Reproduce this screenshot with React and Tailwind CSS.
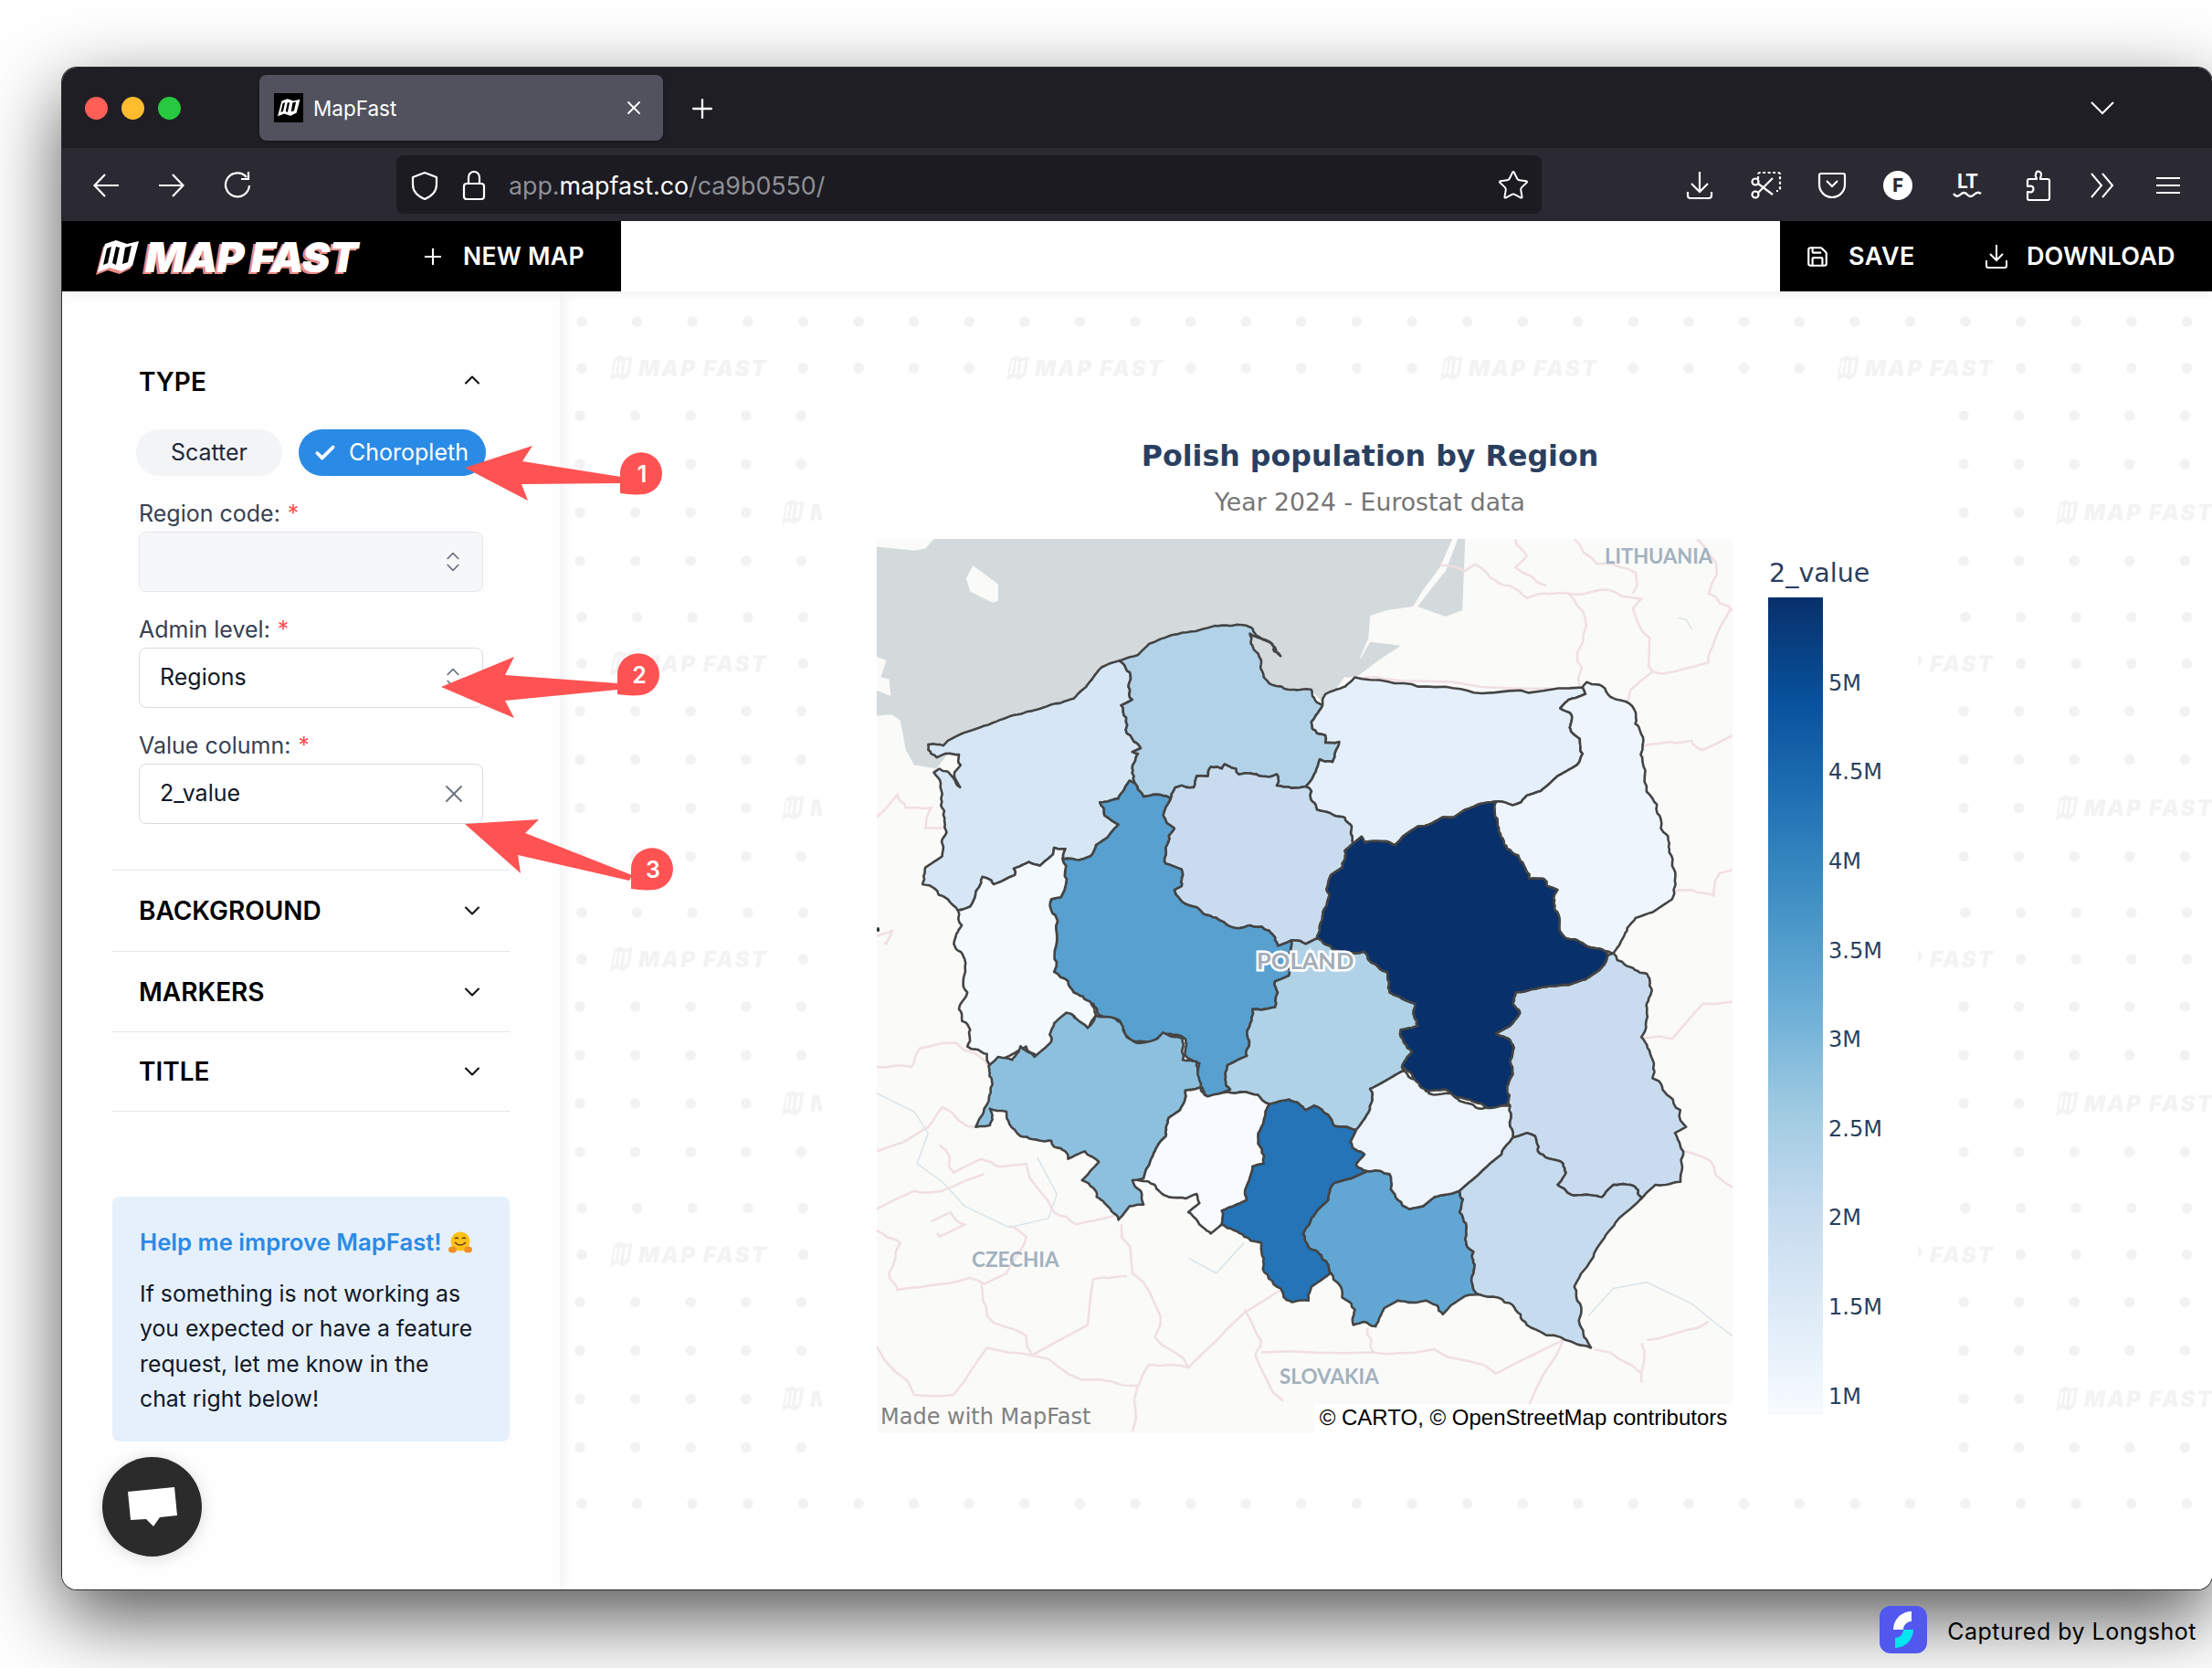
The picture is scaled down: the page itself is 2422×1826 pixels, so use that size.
import { Check, ChevronDown, ChevronUp, ChevronsUpDown, Plus, Save, Star, X } from 'lucide-react';

// Map coordinates are in the two crops they were traced from: "upper" points as is,
// "lower" points (odd segments) get squeezed into the same space by parse().
const parse = (str, lower) =>
  str.trim().split(/\s+/).filter(Boolean).map((p) => {
    const [x, y] = p.split(',').map(Number);
    return [x, lower ? 1274 + 0.8167 * y : y];
  });
const toPoints = (segs) => segs.flatMap((s, i) => parse(s, i % 2 === 1));

// roughen borders; noise depends on the midpoint so that shared edges stay shared
function roughen(pts) {
  return pts.flatMap(([x, y], i) => {
    const [a, b] = pts[(i + 1) % pts.length];
    const len = Math.hypot(a - x, b - y);
    if (len < 10) return [[x, y]];
    const mx = (x + a) / 2;
    const my = (y + b) / 2;
    const n = Math.sin(Math.round(mx) * 12.9 + Math.round(my) * 78.2) * 43758.5;
    const r = (n - Math.floor(n) - 0.5) * Math.min(len, 60) * 0.22;
    return [[x, y], [mx + r, my - r]];
  });
}

const REGIONS = [
  { fill: '#d6e6f4', segs: ['468,350 435,368 418,400 385,452 345,468 302,487 270,500 225,525 190,543 160,565 152,578 125,575 130,600 140,610 155,600 180,602 183,630 172,650 182,690 170,665 145,640 135,650 148,720 155,790 158,810 150,830 150,875 120,905 115,950 135,960 160,990 178,1020 200,1010 210,970 222,930 238,940 242,950 280,925 278,908 305,890 325,900 348,870 350,852 370,855 365,882 395,885 415,875 425,845 445,825 465,790 440,765 432,730 465,720 485,672 495,680 490,640 500,600 490,595 505,585 490,560 480,545 470,470 490,455 483,420 487,400 478,370'] },
  { fill: '#b2d2e8', segs: ['468,350 500,335 520,305 560,282 637,257 688,255 715,285 740,305 755,338 745,315 725,295 700,278 710,325 720,360 725,395 740,415 770,428 810,428 815,450 830,470 822,490 810,515 820,545 835,550 835,570 860,568 848,622 825,615 815,655 800,688 775,692 748,685 748,655 735,662 712,655 680,655 675,640 655,628 650,640 630,635 625,660 605,660 600,690 578,685 567,690 558,722 540,710 510,715 495,680 490,640 500,600 490,595 505,585 490,560 480,545 470,470 490,455 483,420 487,400 478,370'] },
  { fill: '#e4eff9', segs: ['888,395 1000,420 1115,438 1295,422 1300,440 1270,455 1255,478 1275,495 1272,530 1290,560 1295,600 1285,630 1250,660 1220,700 1195,712 1185,730 1170,738 1140,728 1110,735 1085,750 1065,770 1045,770 1020,790 1000,795 975,820 960,845 935,835 905,838 900,822 885,840 880,790 870,772 850,765 820,750 810,700 800,688 815,655 825,615 848,622 860,568 835,570 835,550 820,545 810,515 822,490 830,470 835,440 870,420'] },
  { fill: '#eef5fc', segs: ['1295,422 1302,408 1325,415 1340,440 1372,460 1390,490 1398,540 1402,620 1420,720 1435,800 1450,840 1455,900 1455,990 1420,1025 1390,1040 1370,1085 1350,1135 1330,1125 1290,1105 1265,1095 1250,1025 1250,965 1232,955 1225,935 1200,935 1190,900 1160,855 1145,800 1140,728 1170,738 1185,730 1195,712 1220,700 1250,660 1285,630 1295,600 1290,560 1272,530 1275,495 1255,478 1270,455 1300,440'] },
  { fill: '#c9dcef', segs: ['558,722 567,690 578,685 600,690 605,660 625,660 630,635 650,640 655,628 675,640 680,655 712,655 735,662 748,655 748,685 775,692 800,688 810,700 820,750 850,765 870,772 880,790 885,840 870,860 865,905 845,925 840,990 830,1040 820,1095 800,1110 775,1100 750,1115 735,1075 700,1060 680,1068 640,1040 600,1010 575,990 565,965 578,955 578,910 550,895 555,820 565,800 545,765'] },
  { fill: '#58a0cf', segs: ['485,672 495,680 510,715 540,710 558,722 545,765 565,800 555,820 550,895 578,910 578,955 565,965 575,990 600,1010 640,1040 680,1068 700,1060 735,1075 750,1115 775,1100 770,1195 745,1210 745,1280 705,1285 695,1350 695,1410 660,1435 665,1500 625,1520 610,1490 610,1430 585,1410 585,1365 545,1350 525,1375 490,1370 475,1340 460,1310 430,1300 420,1270 385,1240 375,1210 350,1185 355,1090 345,1020 345,990 362,985 365,882 395,885 415,875 425,845 445,825 465,790 440,765 432,730 465,720'] },
  { fill: '#f4f9fe', segs: ['178,1020 200,1010 210,970 222,930 238,940 242,950 280,925 278,908 305,890 325,900 348,870 350,852 370,855 365,882 362,985 345,990 345,1020 355,1090 350,1185 375,1210 385,1240 415,1265 425,1300 412,1335 395,1320 372,1295 350,1345 345,1375 320,1410 300,1385 270,1410 235,1435 230,1405 195,1385 200,1340 180,1285 195,1240 190,1150 172,1100 185,1060'] },
  { fill: '#c9dcef', segs: ['1350,1135 1370,1165 1410,1190 1418,1230 1410,1280 1400,1360 1420,1420 1420,1470', '1450,300 1480,400 1460,420 1475,480 1470,580 1425,590 1400,635 1380,590 1350,590 1330,630 1280,625 1250,590 1265,550 1260,520 1215,480 1210,430 1195,420 1170,435 1165,330', '1160,1500 1170,1460 1170,1380 1140,1350 1165,1330 1183,1295 1170,1270 1175,1240 1230,1225 1270,1220 1300,1205 1325,1180 1340,1140'] },
  { fill: '#b0d2e7', segs: ['775,1100 800,1110 820,1095 850,1125 880,1135 905,1130 925,1165 945,1185 950,1240 995,1270 1000,1330 970,1340 990,1400 972,1440', '975,215 915,275 915,340 890,410 850,395 840,360 815,330 800,345 770,310 735,325 715,295 660,285', '665,1500 660,1435 695,1410 695,1350 705,1285 745,1280 745,1210 770,1195'] },
  { fill: '#8dc0de', segs: ['', '233,200 250,170 275,180 290,135 315,170 345,120 350,60 372,25 390,45 410,75 425,35 460,45 480,105 500,125 535,110 545,90 580,110 580,180 605,185 612,270 585,280 575,345 555,370 550,430 525,500 510,570 490,575 505,610 510,655 485,660 465,705 440,650 420,600 400,575 430,515 405,480 375,505 370,480 350,465 345,445 310,440 290,430 270,390 265,350 235,340 235,395 210,400 225,340 240,260'] },
  { fill: '#f7fbff', segs: ['', '585,280 612,270 625,300 660,285 715,295 735,325 725,380 715,430 725,520 705,530 695,640 650,675 650,720 630,750 605,705 590,680 610,650 605,620 585,635 555,630 530,590 500,575 510,570 525,500 550,430 555,370 575,345'] },
  { fill: '#62a7d3', segs: ['', '910,545 950,555 965,640 985,670 1010,660 1030,630 1075,610 1075,680 1085,770 1100,810 1100,880 1110,950 1085,955 1060,985 1045,1015 1015,970 965,970 940,995 925,1055 905,1040 885,1050 888,1000 865,960 845,880 830,835 805,795 795,750 810,700 840,640 850,585 880,570'] },
  { fill: '#2474b7', segs: ['', '735,325 770,310 800,345 815,330 840,360 850,395 890,410 880,450 905,490 890,525 910,545 880,570 850,585 840,640 810,700 795,750 805,795 830,835 845,880 810,925 805,970 775,975 755,930 725,850 720,780 690,760 650,720 650,675 695,640 705,530 725,520 715,430 725,380'] },
  { fill: '#edf4fc', segs: ['', '975,215 1005,260 1020,290 1060,290 1075,315 1115,340 1165,330 1170,435 1150,490 1115,545 1075,610 1030,630 1010,660 985,670 965,640 950,555 910,545 890,525 905,490 880,450 890,410 915,340 915,275'] },
  { fill: '#c7dbef', segs: ['', '1170,435 1195,420 1210,430 1215,480 1260,520 1265,550 1250,590 1280,625 1330,630 1350,590 1380,590 1400,635 1360,700 1320,800 1280,925 1290,1050 1310,1125 1275,1105 1195,1050 1170,985 1110,950 1100,880 1100,810 1085,770 1075,680 1075,610 1115,545 1150,490'] },
  { fill: '#08306b', segs: ['1140,728 1145,800 1160,855 1190,900 1200,935 1225,935 1232,955 1250,965 1250,1025 1265,1095 1290,1105 1330,1125 1340,1140 1325,1180 1300,1205 1270,1220 1230,1225 1175,1240 1170,1270 1183,1295 1165,1330 1140,1350 1170,1380 1170,1460 1160,1500 1160,1540 1125,1550 1070,1520 1050,1500 1015,1505 990,1460 972,1440 990,1400 970,1340 1000,1330 995,1270 950,1240 945,1185 925,1165 905,1130 880,1135 850,1125 820,1095 830,1040 840,990 845,925 865,905 870,860 885,840 900,822 905,838 935,835 960,845 975,820 1000,795 1020,790 1045,770 1065,770 1085,750 1110,735'] },
];

const SEA = [
  '33,45 100,55 120,50 135,24 1062,24 1040,100 1010,160 992,205 945,215 915,230 912,290 895,350 870,392 835,470 810,430 600,400 300,520 160,600 140,640 100,630 85,590 75,510 60,495 33,498 33,430 58,445 55,400 40,395 50,350 33,340',
  '1072,24 1085,24 1080,215 1050,232 1000,205 1018,170 1050,110',
  '900,340 915,300 970,310 930,350 890,395 868,395',
];

const BORDERS = [
  ['1040,95 1085,110 1102,92 1130,128 1165,150 1195,182 1225,170 1270,170 1300,240 1285,330 1290,420'],
  ['888,398 1000,405 1240,425'],
  ['1270,170 1340,160 1400,185 1385,210 1415,290 1420,380 1440,385 1520,355 1530,300 1560,210'],
  ['1175,24 1195,70 1175,100 1230,150'],
  ['1280,24 1320,90 1390,115 1385,170'],
  ['1500,24 1535,120 1520,170 1565,220'],
  ['1400,580 1440,570 1490,565 1510,590 1565,550'],
  ['1375,460 1380,430 1420,380'],
  ['1455,970 1490,965 1530,980 1540,920 1565,910'],
  ['33,770 70,710 85,745 130,745 120,800 155,800'],
  ['33,1090 60,1075 50,1110 33,1095'],
  ['33,1440 95,1440 110,1390 175,1375 235,1440'],
  ['1400,1360 1455,1365 1510,1270 1565,1265'],
  ['', '33,480 80,450 125,400 150,335 180,380 210,400'],
  ['', '145,460 170,550 220,505 250,530 300,520 350,680 390,720 460,690'],
  ['', '33,670 100,610 150,610 225,555'],
  ['', '130,710 165,680 190,720 145,760 130,710'],
  ['', '33,740 75,780 55,880 70,935 130,920 200,895 225,915 265,880 300,760 270,725'],
  ['', '220,915 230,1020 300,1085 310,1150 410,1050 420,900 480,890'],
  ['', '33,1120 100,1280 170,1280 230,1125 310,1150 400,1230 500,1250 520,1180 590,1190 690,1010 760,930'],
  ['', '500,1250 490,1400'],
  ['', '470,720 490,880 540,1020 530,1090 590,1190'],
  ['', '690,1000 720,1100 710,1150 760,1300'],
  ['', '910,1060 920,1140 720,1140'],
  ['', '920,1140 1030,1130 1140,1210 1260,1100'],
  ['', '1260,1100 1200,1310'],
  ['', '1400,1110 1400,1240'],
  ['', '1315,1130 1400,1210'],
  ['', '1410,1100 1500,1060 1520,1040'],
  ['', '1475,480 1530,530 1565,600'],
];

const RIVERS = [
  ['', '33,290 100,350 125,420 105,520 150,580 190,660 270,730 340,700 355,620 320,500'],
  ['', '690,780 640,880 590,830'],
  ['', '1305,1020 1350,930 1410,910 1490,980 1530,1040 1565,1090'],
  ['1465,235 1480,240 1490,265'],
];

const str = (pts) => pts.map(([x, y]) => `${x.toFixed(1)},${y.toFixed(1)}`).join(' ');

const LEGEND_TICKS = ['5M', '4.5M', '4M', '3.5M', '3M', '2.5M', '2M', '1.5M', '1M'];

const DOT_ROWS = [
  { y: 22, x: 17, skip: [] },
  { y: 73, x: 17, skip: [1, 2, 3, 8, 9, 10] },
  { y: 125, x: 15, skip: [] },
  { y: 178, x: 15, skip: [] },
  { y: 231, x: 15, skip: [4, 5, 6, 12, 13, 14] },
  { y: 284, x: 15, skip: [] },
];
const WATERMARKS = [
  { x: 47, y: 73 },
  { x: 481, y: 73 },
  { x: 235, y: 231 },
  { x: 721, y: 231 },
];

function LogoMark({ fill, slit }) {
  return (
    <>
      <polygon points="10,5 22,1 34,5 47,2 40,29 28,35 15,31 2,36" fill={fill} />
      <polygon points="12,10 17,8 13,26 8,28" fill={slit} />
      <polygon points="22,8 26,9 22,28 18,26" fill={slit} />
      <polygon points="32,9 39,7 35,25 29,27" fill={slit} />
    </>
  );
}

function DotPattern() {
  return (
    <svg className="absolute top-0 left-0 w-full h-[1341px]">
      <defs>
        <pattern id="mapfast-tile" x="7" y="11" width="909" height="323.5" patternUnits="userSpaceOnUse">
          {DOT_ROWS.map((row) =>
            Array.from({ length: 15 }, (_, k) =>
              row.skip.includes(k) ? null : (
                <circle key={`${row.y}-${k}`} cx={row.x + 60.6 * k} cy={row.y} r="5.8" fill="#f2f2f2" />
              ),
            ),
          )}
          {WATERMARKS.map((w) => (
            <g key={w.x}>
              <g transform={`translate(${w.x} ${w.y - 15}) scale(0.55 0.8)`}>
                <LogoMark fill="#f3f3f3" slit="#ffffff" />
              </g>
              <text x={w.x + 32} y={w.y + 9} fontFamily="Inter" fontWeight="900" fontStyle="italic" fontSize="24" fill="#f3f3f3" textLength="140">
                MAP FAST
              </text>
            </g>
          ))}
        </pattern>
      </defs>
      <rect width="100%" height="100%" fill="url(#mapfast-tile)" />
    </svg>
  );
}

function PolandMap() {
  return (
    <div className="relative w-[937px] h-[979px] bg-[#fafaf8] overflow-hidden shrink-0">
      <svg className="w-full h-full block" viewBox="33 24 1530 2398" preserveAspectRatio="none">
        {SEA.map((s) => (
          <polygon key={s} points={str(parse(s))} fill="#d4dadc" />
        ))}
        <polygon points="193,130 205,95 250,145 250,190 240,195 200,165" fill="#fafaf8" />
        {RIVERS.map((r, i) => (
          <polyline key={i} points={str(toPoints(r))} fill="none" stroke="#d9e4ea" strokeWidth="1.5" vectorEffect="non-scaling-stroke" />
        ))}
        {BORDERS.map((b, i) => (
          <polyline key={i} points={str(roughen(roughen(toPoints(b))).slice(0, -3))} fill="none" stroke="#f0dfe2" strokeWidth="2.5" vectorEffect="non-scaling-stroke" />
        ))}
        {REGIONS.map((r) => (
          <polygon
            key={r.segs.join('')}
            points={str(roughen(roughen(roughen(toPoints(r.segs)))))}
            fill={r.fill}
            stroke="#444444"
            strokeWidth="2.6"
            strokeLinejoin="round"
            vectorEffect="non-scaling-stroke"
          />
        ))}
      </svg>
      <span className="absolute left-0 top-[425px] w-[3px] h-[5px] rounded-full bg-[#333]" />
      <span className="absolute left-[797px] top-[7px] text-[22px] leading-[24px] font-bold text-[#a3b1bf] font-['Lato',sans-serif]">LITHUANIA</span>
      <span className="absolute left-[416px] top-[447px] text-[25.5px] leading-[28px] font-bold text-[#a3adb8] font-['Lato',sans-serif] [-webkit-text-stroke:5px_#ffffff] [paint-order:stroke_fill]">POLAND</span>
      <span className="absolute left-[104px] top-[777px] text-[22.5px] leading-[24px] font-bold text-[#a3b1bf] font-['Lato',sans-serif]">CZECHIA</span>
      <span className="absolute left-[441px] top-[905px] text-[22.5px] leading-[24px] font-bold text-[#a3b1bf] font-['Lato',sans-serif]">SLOVAKIA</span>
      <span className="absolute left-[4px] bottom-[2px] text-[24px] leading-[32px] text-[#808080] font-['DejaVu_Sans',sans-serif]">Made with MapFast</span>
      <span className="absolute right-0 bottom-0 h-[32px] w-[458px] bg-white text-black text-[24px] leading-[30px] text-center whitespace-nowrap font-['Liberation_Sans',sans-serif]">© CARTO, © OpenStreetMap contributors</span>
    </div>
  );
}

function Legend() {
  return (
    <div className="ml-[39px] pt-[20px] font-['DejaVu_Sans',sans-serif] text-[#2a3f5f]">
      <div className="text-[28.5px] leading-[36px] ml-[1px]">2_value</div>
      <div className="flex mt-[8px]">
        <div className="w-[60px] h-[895px] bg-[linear-gradient(to_bottom,#08306b_0%,#08519c_12.5%,#2171b5_25%,#4292c6_37.5%,#6baed6_50%,#9ecae1_62.5%,#c6dbef_75%,#deebf7_87.5%,#f7fbff_100%)]" />
        <div className="pl-[6px] pt-[45px]">
          {LEGEND_TICKS.map((t) => (
            <div key={t} className="h-[97.6px] flex items-center text-[24px]">{t}</div>
          ))}
        </div>
      </div>
    </div>
  );
}

function Arrows() {
  const arrows = [
    { n: 1, pts: '509,512 583,488 572,505 680,522 679,529 571,530 578,548', cx: 703, cy: 519 },
    { n: 2, pts: '483,752 563,719 553,739 676,748 676,755 553,767 563,786', cx: 700, cy: 739 },
    { n: 3, pts: '509,902 590,897 575,912 692,958 689,964 567,936 570,956', cx: 715, cy: 952 },
  ];
  return (
    <svg className="absolute inset-0 z-30 pointer-events-none" width="2422" height="1826" viewBox="0 0 2422 1826">
      {arrows.map((a) => (
        <g key={a.n}>
          <polygon points={a.pts} fill="#ff5252" />
          <path transform={`translate(${a.cx} ${a.cy})`} d="M-24 21V-2A23 23 0 1 1 2 22C-8 23-16 22-24 21Z" fill="#ff5252" />
          <text x={a.cx} y={a.cy + 9} textAnchor="middle" fontFamily="Inter" fontWeight="600" fontSize="25" fill="#ffffff">{a.n}</text>
        </g>
      ))}
    </svg>
  );
}

function TitleBar() {
  return (
    <div className="h-[88px] shrink-0 bg-[#1f1e24] flex items-center text-white">
      <div className="flex gap-[15px] ml-[25px]">
        <span className="w-[25px] h-[25px] rounded-full bg-[#ff5f57]" />
        <span className="w-[25px] h-[25px] rounded-full bg-[#febc2e]" />
        <span className="w-[25px] h-[25px] rounded-full bg-[#28c840]" />
      </div>
      <div className="ml-[86px] w-[442px] h-[72px] rounded-[8px] bg-[#52525e] flex items-center pl-[16px] pr-[20px] shadow-[0_1px_3px_rgba(0,0,0,0.4)]">
        <div className="w-[32px] h-[32px] bg-black flex items-center justify-center">
          <svg width="26" height="22" viewBox="0 0 48 38"><LogoMark fill="#ffffff" slit="#000000" /></svg>
        </div>
        <span className="ml-[11px] pt-[2px] text-[22.5px]">MapFast</span>
        <X className="ml-auto" size={24} strokeWidth={1.8} />
      </div>
      <Plus className="ml-[26px] mt-[2px]" size={34} strokeWidth={1.6} />
      <svg className="ml-auto mr-[106px]" width="28" height="16" viewBox="0 0 28 16" fill="none" stroke="currentColor" strokeWidth="2">
        <path d="M2 2l12 12L26 2" />
      </svg>
    </div>
  );
}

function Toolbar() {
  return (
    <div className="h-[80px] shrink-0 bg-[#2b2a33] pt-[2px] flex items-center text-white">
      <svg className="ml-[33px]" width="30" height="28" viewBox="0 0 30 28" fill="none" stroke="currentColor" strokeWidth="2.2">
        <path d="M29 14H3M14 2 2.5 14 14 26" />
      </svg>
      <svg className="ml-[42px]" width="30" height="28" viewBox="0 0 30 28" fill="none" stroke="currentColor" strokeWidth="2.2">
        <path d="M1 14h26M16 2l11.5 12L16 26" />
      </svg>
      <svg className="ml-[42px]" width="30" height="32" viewBox="0 0 30 32" fill="none" stroke="currentColor" strokeWidth="2.2">
        <path d="M25 7a13 13 0 1 0 3 9" />
        <path d="M27 1v8h-8" />
      </svg>
      <div className="ml-[159px] -mt-[2px] pt-[2px] w-[1254px] h-[64px] rounded-[8px] bg-[#1c1b22] flex items-center">
        <svg className="ml-[15px]" width="32" height="33" viewBox="0 0 32 33" fill="none" stroke="currentColor" strokeWidth="2.2" strokeLinejoin="round">
          <path d="M16 2 29 7v8c0 8-6 13-13 16C9 28 3 23 3 15V7z" />
        </svg>
        <svg className="ml-[25px]" width="26" height="33" viewBox="0 0 26 33" fill="none" stroke="currentColor" strokeWidth="2.2">
          <rect x="2" y="14" width="22" height="17" rx="3" />
          <path d="M7 14V7a6 6 0 0 1 12 0v7" />
        </svg>
        <div className="ml-[25px] text-[26.8px] text-[#8f8f95]">
          app.<span className="text-white">mapfast.co</span>/ca9b0550/
        </div>
        <Star className="ml-auto mr-[13px]" size={36} strokeWidth={1.3} />
      </div>
      <svg className="ml-[158px]" width="30" height="32" viewBox="0 0 30 32" fill="none" stroke="currentColor" strokeWidth="2.2">
        <path d="M15 1v22M6 14l9 9 9-9M2 23v4a3 3 0 0 0 3 3h20a3 3 0 0 0 3-3v-4" />
      </svg>
      <svg className="ml-[41px]" width="34" height="32" viewBox="0 0 34 32" fill="none" stroke="currentColor" strokeWidth="2.2">
        <path d="M8 9V4a2 2 0 0 1 2-2h20a2 2 0 0 1 2 2v16a2 2 0 0 1-2 2h-2" strokeDasharray="3 2.5" />
        <circle cx="5" cy="12" r="3.5" />
        <circle cx="5" cy="26" r="3.5" />
        <path d="M8 14l16 12M8 24 24 8" />
      </svg>
      <svg className="ml-[39px]" width="32" height="32" viewBox="0 0 32 32" fill="none" stroke="currentColor" strokeWidth="2.2">
        <path d="M4 3h24a2 2 0 0 1 2 2v10a14 14 0 0 1-28 0V5a2 2 0 0 1 2-2z" />
        <path d="M10 11l6 6 6-6" />
      </svg>
      <div className="ml-[40px] w-[32px] h-[32px] rounded-full bg-white text-[#2b2a33] text-[20px] font-extrabold flex items-center justify-center">F</div>
      <div className="ml-[44px] w-[32px] flex flex-col items-center">
        <span className="text-[21px] leading-[21px] font-bold tracking-[-1px]">LT</span>
        <svg width="32" height="10" viewBox="0 0 32 10" fill="none" stroke="currentColor" strokeWidth="2.4">
          <path d="M1 3q3.500 5 7.500 1t7.500 0 7.500 0 7.500-1" />
        </svg>
      </div>
      <svg className="ml-[47px]" width="30" height="34" viewBox="0 0 30 34" fill="none" stroke="currentColor" strokeWidth="2.2" strokeLinejoin="round">
        <path d="M13 2c2-1 5 0 5 3 0 2-1 3-1 5h8a2 2 0 0 1 2 2v19a2 2 0 0 1-2 2H5a2 2 0 0 1-2-2v-7c2 0 3 1 5 0 2-2 2-5 0-6-2-1-3 0-5 0v-6a2 2 0 0 1 2-2h8c0-2-2-3-1-5z" />
      </svg>
      <svg className="ml-[41px]" width="28" height="30" viewBox="0 0 28 30" fill="none" stroke="currentColor" strokeWidth="2">
        <path d="M2 2l11 13L2 28M14 2l11 13-11 13" />
      </svg>
      <svg className="ml-[45px]" width="26" height="20" viewBox="0 0 26 20" fill="none" stroke="currentColor" strokeWidth="2.2">
        <path d="M0 2h26M0 10h26M0 18h26" />
      </svg>
    </div>
  );
}

function AppHeader() {
  return (
    <div className="relative z-20 h-[77px] shrink-0 flex bg-white text-white shadow-[0_2px_12px_rgba(0,0,0,0.07)]">
      <div className="w-[612px] bg-black flex items-center">
        <svg className="ml-[37px] overflow-visible" width="48" height="38" viewBox="0 0 48 38">
          <g transform="translate(-2 3)"><LogoMark fill="#e98a86" slit="#e98a86" /></g>
          <LogoMark fill="#ffffff" slit="#000000" />
        </svg>
        <span className="ml-[6px] w-[238px] text-[46px] leading-none font-black italic tracking-[-1px] whitespace-nowrap [text-shadow:-3px_2px_0_#e98a86]">MAP FAST</span>
        <Plus className="ml-[63px]" size={28} strokeWidth={1.8} />
        <span className="ml-[19px] text-[26.5px] font-semibold tracking-[0.3px]">NEW MAP</span>
      </div>
      <div className="flex-1" />
      <div className="w-[473px] bg-black flex items-center">
        <Save className="ml-[28px]" size={26} strokeWidth={2} />
        <span className="ml-[21px] pt-[1px] text-[27px] font-semibold tracking-[0.5px]">SAVE</span>
        <svg className="ml-[77px]" width="24" height="28" viewBox="0 0 24 28" fill="none" stroke="currentColor" strokeWidth="2">
          <path d="M12 1v17M5 11l7 7 7-7M1 18v6a2 2 0 0 0 2 2h18a2 2 0 0 0 2-2v-6" />
        </svg>
        <span className="ml-[21px] pt-[1px] text-[27px] font-semibold tracking-[0.2px]">DOWNLOAD</span>
      </div>
    </div>
  );
}

function Field({ label, mt, disabled, value, icon }) {
  return (
    <div className={mt}>
      <div className="h-[30px] px-[29px] flex items-center text-[25px] text-[#374151]">
        {label}: <span className="ml-[8px] text-[#ff5252]">*</span>
      </div>
      <div className={`mx-[29px] mt-[4px] h-[66px] rounded-[8px] border flex items-center pl-[22px] pr-[18px] text-[25px] text-[#111827] ${disabled ? 'bg-[#f6f7f9] border-[#e5e7eb]' : 'bg-white border-[#d8dbe1]'}`}>
        {value}
        <span className="ml-auto text-[#6b7280]">{icon}</span>
      </div>
    </div>
  );
}

function SectionRow({ title, height, last }) {
  return (
    <div className={`${height} px-[29px] flex items-center justify-between border-t border-[#e5e7eb] ${last ? 'border-b' : ''}`}>
      <span className="text-[28px] font-semibold text-black">{title}</span>
      <ChevronDown className="-mr-[2px]" size={28} strokeWidth={1.8} color="#111111" />
    </div>
  );
}

function HugEmoji() {
  return (
    <svg className="ml-[7px]" width="26" height="24" viewBox="0 0 26 24">
      <circle cx="13" cy="11" r="10.500" fill="#fcc21b" />
      <path d="M7 8q2-2 4 0M15 8q2-2 4 0" fill="none" stroke="#6b3d0f" strokeWidth="1.400" />
      <path d="M7 12q6 6 12 0" fill="none" stroke="#6b3d0f" strokeWidth="1.400" />
      <ellipse cx="4.500" cy="20" rx="4.500" ry="3.500" fill="#f19020" />
      <ellipse cx="21.500" cy="20" rx="4.500" ry="3.500" fill="#f19020" />
    </svg>
  );
}

function Sidebar() {
  return (
    <aside className="relative z-10 w-[545px] shrink-0 bg-[#fefefe] pt-[72px] shadow-[4px_0_12px_rgba(0,0,0,0.06)]">
      <div className="mx-[55px]">
        <div className="h-[54px] px-[29px] flex items-center justify-between">
          <span className="text-[28px] font-semibold text-black">TYPE</span>
          <ChevronUp className="-mr-[2px] -mt-[4px]" size={28} strokeWidth={1.8} color="#111111" />
        </div>
        <div className="mt-[25px] ml-[26px] flex gap-[18px] text-[25px]">
          <div className="w-[160px] h-[51px] rounded-full bg-[#f3f4f6] text-[#1f2937] flex items-center justify-center">Scatter</div>
          <div className="w-[205px] h-[51px] rounded-full bg-[#2a8be6] text-white flex items-center pl-[16px]">
            <Check size={26} strokeWidth={3.5} />
            <span className="ml-[13px]">Choropleth</span>
          </div>
        </div>
        <Field label="Region code" mt="mt-[27px]" disabled icon={<ChevronsUpDown size={28} strokeWidth={1.5} />} />
        <Field label="Admin level" mt="mt-[27px]" value="Regions" icon={<ChevronsUpDown size={28} strokeWidth={1.5} />} />
        <Field label="Value column" mt="mt-[27px]" value="2_value" icon={<X className="-mr-[3px]" size={32} strokeWidth={1.4} />} />
        <div className="mt-[50px]">
          <SectionRow title="BACKGROUND" height="h-[89px]" />
          <SectionRow title="MARKERS" height="h-[88px]" />
          <SectionRow title="TITLE" height="h-[88px]" last />
        </div>
        <div className="mt-[93px] h-[268px] rounded-[8px] bg-[#e6f0fb] px-[30px] pt-[33px]">
          <div className="flex items-center text-[25.7px] leading-[34px] font-semibold text-[#2a8be6] whitespace-nowrap">
            Help me improve MapFast!
            <HugEmoji />
          </div>
          <p className="mt-[20px] pr-[10px] text-[24.8px] leading-[38.300px] text-[#111827]">
            If something is not working as you expected or have a feature request, let me know in the chat right below!
          </p>
        </div>
      </div>
      <button className="absolute left-[44px] top-[1276px] w-[109px] h-[109px] rounded-full bg-[#2b2b2b] flex items-center justify-center shadow-[0_2px_16px_rgba(0,0,0,0.15)]">
        <svg width="54" height="44" viewBox="0 0 54 44" fill="#ffffff">
          <path d="M0 5 51 0l3 31-19 2-7 10-8-8-17 1z" />
        </svg>
      </button>
    </aside>
  );
}

function PlotPanel() {
  return (
    <div className="relative w-[1200px] h-[1170px] bg-white pt-[48px]">
      <h1 className="h-[42px] leading-[42px] text-center text-[31.7px] font-bold text-[#2a3f5f] font-['DejaVu_Sans',sans-serif]">Polish population by Region</h1>
      <div className="mt-[10px] h-[40px] leading-[40px] text-center text-[26.7px] text-[#757575] font-['DejaVu_Sans',sans-serif]">Year 2024 - Eurostat data</div>
      <div className="mt-[20px] ml-[60px] flex">
        <PolandMap />
        <Legend />
      </div>
    </div>
  );
}

export default function App() {
  return (
    <div className="relative w-[2422px] h-[1826px] overflow-hidden bg-white pl-[68px] pt-[74px] font-['Inter',sans-serif]">
      <div className="w-[2354px] h-[1666px] rounded-[16px] overflow-hidden flex flex-col bg-white shadow-[0_0_0_1px_#2a2a2a,0_30px_85px_rgba(0,0,0,0.68)]">
        <TitleBar />
        <Toolbar />
        <AppHeader />
        <div className="flex-1 flex min-h-0">
          <Sidebar />
          <main className="relative flex-1 bg-white pl-[287px] pt-[111px] overflow-hidden">
            <DotPattern />
            <PlotPanel />
          </main>
        </div>
      </div>
      <div className="mt-[18px] pr-[17px] flex justify-end items-center gap-[22px]">
        <svg width="52" height="52" viewBox="0 0 52 52">
          <rect width="52" height="52" rx="12" fill="#5258ee" />
          <path d="M35 6V17C30 17 26 21 26 26H15C15 15 24 6 35 6Z" fill="#ffffff" />
          <path d="M17 46V35C22 35 26 31 26 26H37C37 37 28 46 17 46Z" fill="#00e5ee" />
        </svg>
        <span className="pt-[5px] text-[25px] tracking-[0.5px] text-black">Captured by Longshot</span>
      </div>
      <Arrows />
    </div>
  );
}
